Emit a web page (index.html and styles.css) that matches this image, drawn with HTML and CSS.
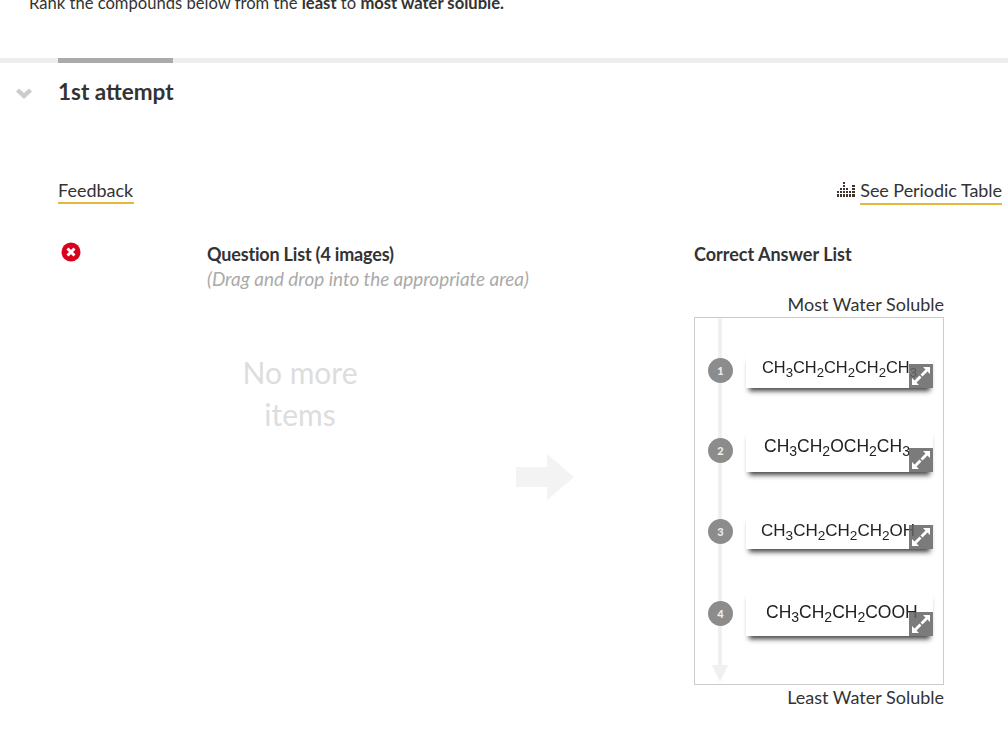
FILE: index.html
```html
<!DOCTYPE html>
<html lang="en">
<head>
    <meta charset="UTF-8">
    <meta name="viewport" content="width=device-width, initial-scale=1.0">
    <title>Ranking Question</title>
    <link rel="stylesheet" href="styles.css">
</head>
<body>
    <p class="prompt">Rank the compounds below from the <b>least</b> to <b>most water soluble.</b></p>

    <div class="tab-bar"><div class="tab-active"></div></div>

    <div class="attempt-head">
        <svg class="chevron" width="16" height="11" viewBox="0 0 16 11"><path d="M0 3.500 L3 0.500 L8 5 L13 0.500 L16 3.500 L8 11 Z"/></svg>
        <h2>1st attempt</h2>
    </div>

    <div class="content">
        <div class="links">
            <a class="link link-feedback">Feedback</a>
            <div class="periodic">
                <svg width="20" height="16" viewBox="0 0 20 16" class="bars">
                    <path d="M6 0h2v2h-2zM6 3h2v2h-2zM6 6h2v2h-2zM6 9h2v2h-2zM6 12h2v3h-2zM9 6h2v2h-2zM9 9h2v2h-2zM9 12h2v3h-2zM3 6h2v2h-2zM3 9h2v2h-2zM3 12h2v3h-2zM0 9h2v2h-2zM0 12h2v3h-2zM12 9h2v2h-2zM12 12h2v3h-2zM15 3h3v2h-3zM15 6h3v2h-3zM15 9h3v2h-3zM15 12h3v3h-3z"/>
                </svg>
                <a class="link link-periodic">See Periodic Table</a>
            </div>
        </div>

        <div class="columns">
            <div class="status">
                <svg width="20" height="20" viewBox="0 0 20 20">
                    <circle cx="10" cy="10" r="9.500" fill="#d8001b"/>
                    <path d="M6.500 6.500 L13.500 13.500 M13.500 6.500 L6.500 13.500" stroke="#fff" stroke-width="3"/>
                </svg>
            </div>

            <div class="question-col">
                <h3>Question List (4 images)</h3>
                <p class="hint">(Drag and drop into the appropriate area)</p>
                <div class="source">
                    <div class="empty">No more items</div>
                    <svg class="move-arrow" width="58" height="46" viewBox="0 0 58 46"><path d="M0 13 H31 V0 L58 23 L31 46 V33 H0 Z"/></svg>
                </div>
            </div>

            <div class="answer-col">
                <h3>Correct Answer List</h3>
                <div class="end-label">Most Water Soluble</div>
                <div class="answers">
                    <div class="timeline"></div>
                    <div class="timeline-head"></div>

                    <div class="answer">
                        <span class="num">1</span>
                        <div class="card card-1">
                            <span class="formula">CH<sub>3</sub>CH<sub>2</sub>CH<sub>2</sub>CH<sub>2</sub>CH<sub>3</sub></span>
                            <span class="expand"><svg width="24" height="24" viewBox="0 0 24 24"><path d="M21 3v7l-2.500-2.500-5 5-2-2 5-5L14 3zM3 21v-7l2.500 2.500 5-5 2 2-5 5L10 21z"/></svg></span>
                        </div>
                    </div>

                    <div class="answer">
                        <span class="num">2</span>
                        <div class="card card-2">
                            <span class="formula">CH<sub>3</sub>CH<sub>2</sub>OCH<sub>2</sub>CH<sub>3</sub></span>
                            <span class="expand"><svg width="24" height="24" viewBox="0 0 24 24"><path d="M21 3v7l-2.500-2.500-5 5-2-2 5-5L14 3zM3 21v-7l2.500 2.500 5-5 2 2-5 5L10 21z"/></svg></span>
                        </div>
                    </div>

                    <div class="answer">
                        <span class="num">3</span>
                        <div class="card card-3">
                            <span class="formula">CH<sub>3</sub>CH<sub>2</sub>CH<sub>2</sub>CH<sub>2</sub>OH</span>
                            <span class="expand"><svg width="24" height="24" viewBox="0 0 24 24"><path d="M21 3v7l-2.500-2.500-5 5-2-2 5-5L14 3zM3 21v-7l2.500 2.500 5-5 2 2-5 5L10 21z"/></svg></span>
                        </div>
                    </div>

                    <div class="answer">
                        <span class="num">4</span>
                        <div class="card card-4">
                            <span class="formula">CH<sub>3</sub>CH<sub>2</sub>CH<sub>2</sub>COOH</span>
                            <span class="expand"><svg width="24" height="24" viewBox="0 0 24 24"><path d="M21 3v7l-2.500-2.500-5 5-2-2 5-5L14 3zM3 21v-7l2.500 2.500 5-5 2 2-5 5L10 21z"/></svg></span>
                        </div>
                    </div>
                </div>
                <div class="end-label">Least Water Soluble</div>
            </div>
        </div>
    </div>
</body>
</html>
```

FILE: styles.css
```css
body {
    margin: 0;
    font-family: Lato, "Open Sans", sans-serif;
    font-size: 18px;
    color: #333;
    background-color: #fff;
    height: 731px;
    overflow: hidden;
}

.prompt {
    margin: -10px 0 0 29px;
    font-size: 16.6px;
    line-height: 26px;
    height: 68px;
}

.tab-bar {
    height: 5px;
    background-color: #eee;
    padding-left: 58px;
}

.tab-active {
    width: 115px;
    height: 5px;
    background-color: #aaa;
}

.attempt-head {
    display: flex;
    align-items: center;
    height: 58px;
    padding-left: 16px;
}

.chevron {
    fill: #ccc;
    margin-top: 3px;
}

.attempt-head h2 {
    margin: 0 0 0 26px;
    font-size: 22.5px;
    font-weight: 700;
    line-height: 58px;
}

.content {
    padding: 55px 6px 0 58px;
}

.links {
    display: flex;
    justify-content: space-between;
    align-items: flex-start;
}

.link {
    display: inline-block;
    padding-top: 1px;
    line-height: 26px;
    border-bottom: 2px solid #e2b93b;
}

.link-feedback {
    padding-top: 2px;
    line-height: 24px;
    padding-right: 1px;
}

.link-periodic {
    letter-spacing: -0.05px;
}

.periodic {
    display: flex;
    align-items: flex-start;
    gap: 3px;
}

.bars {
    fill: #3f332b;
    margin-top: 6px;
    shape-rendering: crispEdges;
}

.columns {
    display: flex;
    margin-top: 37px;
}

.status {
    width: 149px;
    flex-shrink: 0;
    padding-left: 3px;
    box-sizing: border-box;
}

.question-col {
    width: 487px;
    flex-shrink: 0;
}

h3 {
    margin: 0;
    font-size: 18px;
    font-weight: 700;
    line-height: 24px;
    letter-spacing: -0.18px;
}

.hint {
    margin: 1px 0 0;
    font-size: 18.9px;
    font-style: italic;
    color: #aaa;
    line-height: 24px;
}

.source {
    display: flex;
    align-items: flex-start;
}

.empty {
    width: 186px;
    margin-top: 60px;
    font-size: 30px;
    line-height: 42px;
    text-align: center;
    color: #ddd;
}

.move-arrow {
    fill: #f3f3f3;
    margin: 163px 0 0 123px;
}

.answer-col {
    width: 250px;
    flex-shrink: 0;
}

.end-label {
    text-align: right;
    line-height: 26px;
}

.end-label:last-child {
    margin-top: -1px;
}

.answer-col h3 {
    margin-bottom: 25px;
    letter-spacing: 0;
}

.answers {
    position: relative;
    display: flex;
    flex-direction: column;
    gap: 41px;
    height: 368px;
    box-sizing: border-box;
    padding: 34px 10px 0 13px;
    border: 1px solid #ccc;
}

.timeline {
    position: absolute;
    left: 23px;
    top: 0;
    width: 4px;
    height: 348px;
    background-color: #f0f0f0;
}

.timeline-head {
    position: absolute;
    left: 17px;
    top: 347px;
    border-left: 8px solid transparent;
    border-right: 8px solid transparent;
    border-top: 17px solid #f0f0f0;
}

.answer {
    position: relative;
    display: flex;
    align-items: center;
    gap: 13px;
}

.num {
    width: 25px;
    height: 25px;
    flex-shrink: 0;
    border-radius: 50%;
    background-color: #8c8c8c;
    color: #eee;
    font-size: 11px;
    font-weight: 900;
    line-height: 25px;
    text-align: center;
}

.card {
    position: relative;
    width: 187px;
    box-sizing: border-box;
    background-color: #fff;
    box-shadow: 0 6px 5px -3px #444;
}

.card-1 { height: 36px; padding: 5px 0 0 16px; font-size: 16.4px; }
.card-2 { height: 43px; padding: 7px 0 0 18px; font-size: 17.5px; }
.card-3 { height: 36px; padding: 8px 0 0 15px; font-size: 17px; }
.card-4 { height: 46px; padding: 12px 0 0 20px; font-size: 17.5px; }

.formula {
    display: block;
    font-family: "Liberation Sans", Arial, sans-serif;
    line-height: 20px;
    color: #222;
    white-space: nowrap;
    filter: blur(0.5px);
}

.formula sub {
    font-size: 0.8em;
    line-height: 0;
    vertical-align: -4px;
}

.expand {
    position: absolute;
    right: 0;
    bottom: 0;
    width: 24px;
    height: 24px;
    background-color: rgba(100, 100, 100, 0.85);
}

.expand svg {
    display: block;
    fill: #fff;
}
```
